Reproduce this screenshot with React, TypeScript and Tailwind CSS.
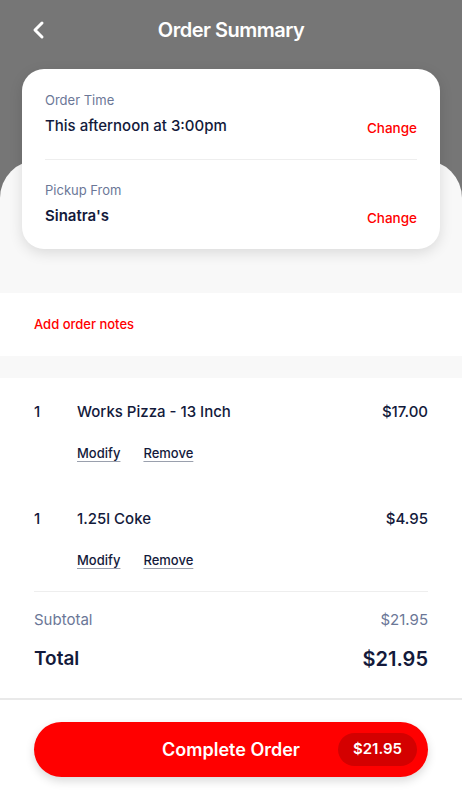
import React from "react";

const items = [
  { qty: 1, name: "Works Pizza - 13 Inch", price: "$17.00" },
  { qty: 1, name: "1.25l Coke", price: "$4.95" },
];

export default function App() {
  return (
    <div
      className="w-[462px] h-[800px] bg-white flex flex-col overflow-hidden text-[#131a3b]"
      style={{ fontFamily: "Inter, 'Noto Sans', sans-serif" }}
    >
      {/* Header + sheet */}
      <div className="bg-[#767676] flex flex-col">
        <div className="relative h-[60px] flex items-center justify-center">
          <button className="absolute left-[31px] top-[20px] text-white">
            <svg width="16" height="20" viewBox="0 0 16 20" fill="none">
              <path d="M11 3 L4 10 L11 17" stroke="white" strokeWidth="3" strokeLinecap="round" strokeLinejoin="round" />
            </svg>
          </button>
          <h1 className="text-white text-[20px] font-semibold tracking-tight">Order Summary</h1>
        </div>
        <div className="h-[100px]" />
        <div className="bg-[#f8f8f8] rounded-t-[38px] flex flex-col pb-[44px]">
          <div className="-mt-[91px] mx-[22px] bg-white rounded-[22px] shadow-[0_4px_14px_rgba(0,0,0,0.12)] px-[23px]">
            <div className="pt-[22px] pb-[22px] border-b border-[#eeeeee]">
              <div className="text-[13px] leading-[18px] text-[#6b7797]">Order Time</div>
              <div className="flex items-center justify-between mt-[6px] h-[22px]">
                <span className="text-[15px] font-medium">This afternoon at 3:00pm</span>
                <span className="text-[13.5px] font-medium text-[#ff0000] mt-[4px]">Change</span>
              </div>
            </div>
            <div className="pt-[21px] pb-[22px]">
              <div className="text-[13px] leading-[18px] text-[#6b7797]">Pickup From</div>
              <div className="flex items-center justify-between mt-[6px] h-[22px]">
                <span className="text-[15px] font-semibold">Sinatra's</span>
                <span className="text-[13.5px] font-medium text-[#ff0000] mt-[4px]">Change</span>
              </div>
            </div>
          </div>
        </div>
      </div>

      {/* Notes */}
      <div className="h-[63px] flex items-center px-[34px]">
        <span className="text-[13px] font-medium text-[#ff0000]">Add order notes</span>
      </div>
      <div className="h-[22px] bg-[#f8f8f8]" />

      {/* Items */}
      <div className="px-[34px] pt-[23px]">
        {items.map((it, i) => (
          <div key={i} className={i === 0 ? "pb-[44px]" : "pb-[20px]"}>
            <div className="flex items-center text-[15px] font-medium h-[22px]">
              <span className="w-[43px]">{it.qty}</span>
              <span className="flex-1">{it.name}</span>
              <span>{it.price}</span>
            </div>
            <div className="flex gap-[23px] pl-[43px] mt-[21px] text-[13px] font-medium h-[20px] items-center">
              <span className="underline decoration-[#9aa0ad] underline-offset-[3px]">Modify</span>
              <span className="underline decoration-[#9aa0ad] underline-offset-[3px]">Remove</span>
            </div>
          </div>
        ))}
        <div className="border-t border-[#eeeeee] pt-[18px] pb-[25px]">
          <div className="flex justify-between text-[15px] text-[#6b7797] h-[20px] items-center">
            <span>Subtotal</span>
            <span>$21.95</span>
          </div>
          <div className="flex justify-between text-[20px] font-semibold h-[28px] items-center mt-[15px]">
            <span className="text-[19px]">Total</span>
            <span>$21.95</span>
          </div>
        </div>
      </div>

      {/* Footer */}
      <div className="border-t-2 border-[#e9e9e9] px-[34px] pt-[22px] flex-1">
        <button className="w-full h-[55px] rounded-full bg-[#ff0000] shadow-[0_4px_10px_rgba(0,0,0,0.15)] flex items-center justify-end pr-[11px]">
          <span className="text-white text-[18px] font-semibold mr-[38px]">Complete Order</span>
          <span className="h-[33px] w-[79px] rounded-full bg-[#d40000] text-white text-[15px] font-semibold flex items-center justify-center">
            $21.95
          </span>
        </button>
      </div>
    </div>
  );
}
